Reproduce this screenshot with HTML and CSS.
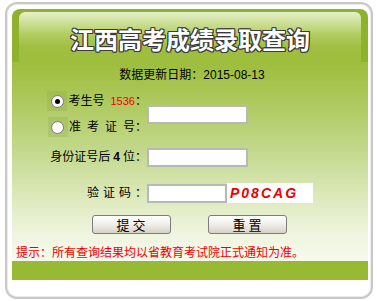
FILE: index.html
```html
<!DOCTYPE html>
<html lang="zh-CN">
<head>
    <meta charset="UTF-8">
    <title>江西高考成绩录取查询</title>
    <link rel="stylesheet" href="styles.css">
</head>
<body>
    <div class="frame">
        <div class="panel">
            <div class="head">
                <div class="head-in">
                    <h1>江西高考成绩录取查询</h1>
                </div>
            </div>
            <div class="main">
                <p class="date">数据更新日期：2015-08-13</p>
                <form class="form" onsubmit="return false">
                    <label class="lbl r1"><span class="rbox"><span class="radio on"></span></span>考生号<span class="num">1536</span>：</label>
                    <div class="field f1"><input class="txt" type="text"></div>
                    <label class="lbl r2"><span class="rbox"><span class="radio"></span></span><span class="wide">准考证</span>号：</label>
                    <label class="lbl r3">身份证号后<b>4</b>位：</label>
                    <div class="field f3"><input class="txt" type="text"></div>
                    <label class="lbl r4"><span class="mid">验证码</span>：</label>
                    <div class="field f4"><input class="txt short" type="text"><span class="code">P08CAG</span></div>
                </form>
                <div class="btns">
                    <button class="btn">提 交</button>
                    <button class="btn">重 置</button>
                </div>
                <p class="tip">提示：所有查询结果均以省教育考试院正式通知为准。</p>
            </div>
            <div class="bar"></div>
        </div>
    </div>
    <div class="foot"></div>
</body>
</html>
```

FILE: styles.css
```css
body {
    margin: 0;
    background: #fff;
    font-family: "Liberation Sans", "Noto Sans CJK SC", sans-serif;
    font-size: 12px;
    color: #000;
}
.frame {
    margin: 2px 4px 0 5px;
    height: 288px;
    border: 2px solid #c8c8c8;
    border-radius: 12px;
    padding: 5px 3px 0 5px;
    box-shadow: inset 0 0 0 1px #ececec;
}
.panel {
    background: #8fb22c;
    border-radius: 8px 8px 0 0;
}
.head {
    padding: 3px 7px 0;
}
.head-in {
    height: 50px;
    border-radius: 6px 6px 0 0;
    background: linear-gradient(#e6efca 0, #cfe19a 20%, #b1cc60 45%, #a0bf42 70%, #9dbd3c 100%);
    display: flex;
    justify-content: center;
    align-items: center;
}
.head-in h1 {
    margin: 4px 0 0;
    font-family: "Noto Sans CJK SC", sans-serif;
    font-size: 24px;
    font-weight: bold;
    line-height: 30px;
    color: #fff;
    text-shadow: 1px 0 #3a3a3a, -1px 0 #3a3a3a, 0 1px #3a3a3a, 0 -1px #3a3a3a,
        1px 1px #3a3a3a, -1px -1px #3a3a3a, 1px -1px #3a3a3a, -1px 1px #3a3a3a;
}
.main {
    background: linear-gradient(#9dbd3c 0, #a9c655 15%, #c3d98d 45%, #dde9bb 68%, #eef4dd 85%, #f7faef 100%);
    height: 199px;
    overflow: hidden;
}
.date {
    margin: 0;
    height: 26px;
    line-height: 26px;
    text-align: center;
    padding-left: 4px;
}
.form {
    display: grid;
    grid-template-columns: 135px 1fr;
    grid-template-rows: 26px 26px 34px 38px;
    align-items: center;
}
.lbl {
    grid-column: 1;
    text-align: right;
    white-space: nowrap;
    display: flex;
    justify-content: flex-end;
    align-items: center;
    line-height: 14px;
}
.lbl b {
    margin: 0 3px;
}
.num {
    color: #e00;
    font-size: 11px;
    margin: 0 0 0 6px;
}
.wide {
    letter-spacing: 6px;
}
.mid {
    letter-spacing: 4px;
}
.rbox {
    width: 20px;
    height: 20px;
    background: rgba(120, 150, 60, 0.18);
    display: flex;
    justify-content: center;
    align-items: center;
    margin-right: 1px;
}
.radio {
    width: 11px;
    height: 11px;
    border-radius: 50%;
    border: 1px solid #808080;
    background: radial-gradient(circle at 60% 60%, #fff 50%, #ddd 100%);
    position: relative;
}
.radio.on::after {
    content: "";
    position: absolute;
    left: 3px;
    top: 3px;
    width: 5px;
    height: 5px;
    border-radius: 50%;
    background: #000;
}
.field {
    grid-column: 2;
    display: flex;
    align-items: center;
}
.f1 {
    grid-row: 1 / span 2;
}
.f3 {
    grid-row: 3;
}
.f4 {
    grid-row: 4;
}
.r3 {
    grid-row: 3;
}
.r4 {
    grid-row: 4;
}
.txt {
    box-sizing: border-box;
    width: 101px;
    height: 19px;
    border: 2px solid #b8b8b8;
    background: #fff;
    margin: 0;
    padding: 0 2px;
}
.txt.short {
    width: 80px;
}
.code {
    display: block;
    box-sizing: border-box;
    width: 86px;
    height: 20px;
    background: #fff;
    color: #e00;
    font-weight: bold;
    font-style: italic;
    font-size: 14px;
    line-height: 20px;
    letter-spacing: 2px;
    padding-left: 3px;
}
.btns {
    margin-top: 3px;
    display: flex;
    justify-content: center;
    gap: 37px;
    padding-right: 2px;
}
.btn {
    width: 79px;
    height: 19px;
    padding: 0;
    border: 1px solid #7c7c7c;
    border-radius: 3px;
    background: linear-gradient(#ffffff 0, #f2f0ec 45%, #d6d2c8 100%);
    font-family: "Noto Sans CJK SC", sans-serif;
    font-size: 13px;
    line-height: 16px;
    color: #000;
}
.tip {
    margin: 9px 0 0;
    padding-left: 4px;
    color: #e00;
    font-family: "Noto Sans CJK SC", sans-serif;
    font-size: 12px;
    line-height: 18px;
}
.bar {
    height: 19px;
    background: #98b934;
}
.foot {
    margin-top: 3px;
    border-top: 1px solid #d0d0d0;
}
```
